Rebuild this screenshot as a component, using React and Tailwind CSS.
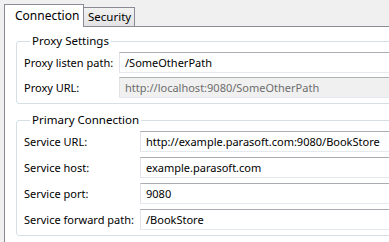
import React from "react";

const font = { fontFamily: '"Noto Sans", "Segoe UI", sans-serif' };

function Field({ value, disabled = false }) {
  return (
    <div
      className={`h-[21px] flex items-center pl-[5px] border border-t-[#abadb3] border-l-[#e2e3ea] border-r-[#dbdfe6] border-b-[#e3e9ef] text-[11px] leading-none whitespace-nowrap ${
        disabled ? "bg-[#f0f0f0] text-[#6d6d6d] border-t-[#adb2b5] border-l-[#e3e3e3] border-b-[#e3e3e3]" : "bg-white text-black"
      }`}
    >
      {value}
    </div>
  );
}

function Group({ title, labelWidth, rows, className = "" }) {
  return (
    <fieldset className={`border border-[#d5dfe5] rounded-[3px] w-[400px] px-[7px] ${className}`}>
      <legend className="ml-[6px] px-[2px] text-[11.5px] leading-[16px] text-black">{title}</legend>
      <div className={`grid items-center ${labelWidth}`}>
        {rows.map(([label, value, disabled]) => (
          <React.Fragment key={label}>
            <span className="text-[11px] text-black whitespace-nowrap leading-none">{label}</span>
            <Field value={value} disabled={disabled} />
          </React.Fragment>
        ))}
      </div>
    </fieldset>
  );
}

export default function App() {
  return (
    <div className="w-[389px] h-[242px] overflow-hidden bg-[#f0f0f0]" style={font}>
      <div className="flex items-end pl-[4px] pt-[3px] h-[26px]">
        <div className="h-[23px] w-[80px] bg-white border border-b-0 border-[#898c95] flex items-center pl-[10px] text-[12px] text-black relative z-10 -mb-px">
          Connection
        </div>
        <div className="h-[19px] w-[51px] bg-gradient-to-b from-[#f2f2f2] to-[#e3e3e3] border border-l-0 border-b-0 border-[#898c95] flex items-center pl-[4px] text-[11.5px] text-black">
          Security
        </div>
      </div>
      <div className="ml-[4px] w-[420px] h-[240px] bg-white border-l border-t border-[#898c95] pl-[11px] pt-[6px]">
        <Group
          title="Proxy Settings"
          labelWidth="grid-cols-[95px_1fr] pt-[3px] pb-[5px] gap-y-[4px]"
          rows={[
            ["Proxy listen path:", "/SomeOtherPath", false],
            ["Proxy URL:", "http://localhost:9080/SomeOtherPath", true],
          ]}
        />
        <Group
          title="Primary Connection"
          className="mt-[8px]"
          labelWidth="grid-cols-[116px_1fr] pt-[3px] pb-[5px] gap-y-[5px]"
          rows={[
            ["Service URL:", "http://example.parasoft.com:9080/BookStore", false],
            ["Service host:", "example.parasoft.com", false],
            ["Service port:", "9080", false],
            ["Service forward path:", "/BookStore", false],
          ]}
        />
      </div>
    </div>
  );
}
